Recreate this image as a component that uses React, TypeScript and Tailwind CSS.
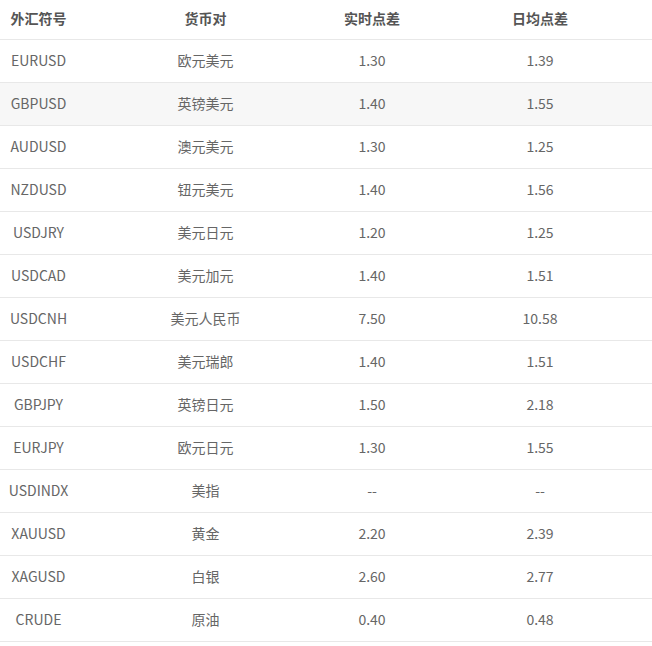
import React from 'react';

const rows = [
  { sym: 'EURUSD', pair: '欧元美元', spread: '1.30', avg: '1.39' },
  { sym: 'GBPUSD', pair: '英镑美元', spread: '1.40', avg: '1.55' },
  { sym: 'AUDUSD', pair: '澳元美元', spread: '1.30', avg: '1.25' },
  { sym: 'NZDUSD', pair: '钮元美元', spread: '1.40', avg: '1.56' },
  { sym: 'USDJRY', pair: '美元日元', spread: '1.20', avg: '1.25' },
  { sym: 'USDCAD', pair: '美元加元', spread: '1.40', avg: '1.51' },
  { sym: 'USDCNH', pair: '美元人民币', spread: '7.50', avg: '10.58' },
  { sym: 'USDCHF', pair: '美元瑞郎', spread: '1.40', avg: '1.51' },
  { sym: 'GBPJPY', pair: '英镑日元', spread: '1.50', avg: '2.18' },
  { sym: 'EURJPY', pair: '欧元日元', spread: '1.30', avg: '1.55' },
  { sym: 'USDINDX', pair: '美指', spread: '--', avg: '--' },
  { sym: 'XAUUSD', pair: '黄金', spread: '2.20', avg: '2.39' },
  { sym: 'XAGUSD', pair: '白银', spread: '2.60', avg: '2.77' },
  { sym: 'CRUDE', pair: '原油', spread: '0.40', avg: '0.48' },
];

const grid = 'grid grid-cols-[77px_257px_76px_1fr] items-center border-b border-[#e8e8e8]';

export default function App() {
  return (
    <div
      className="w-[652px] bg-white text-[14px]"
      style={{ fontFamily: '"Noto Sans CJK SC", "Noto Sans", sans-serif' }}
    >
      {/* 表头 */}
      <div className={`${grid} h-10 pb-[3px] font-bold text-[#555]`}>
        <div className="text-center">外汇符号</div>
        <div className="text-center">货币对</div>
        <div className="text-center">实时点差</div>
        <div className="text-center pl-[18px]">日均点差</div>
      </div>
      {rows.map((r, i) => (
        <div key={r.sym} className={`${grid} h-[43px] pb-[2px] text-[#666] ${i === 1 ? 'bg-[#f7f7f7]' : ''}`}>
          <div className="text-center">{r.sym}</div>
          <div className="text-center">{r.pair}</div>
          <div className="text-center">{r.spread}</div>
          <div className="text-center pl-[18px]">{r.avg}</div>
        </div>
      ))}
    </div>
  );
}
